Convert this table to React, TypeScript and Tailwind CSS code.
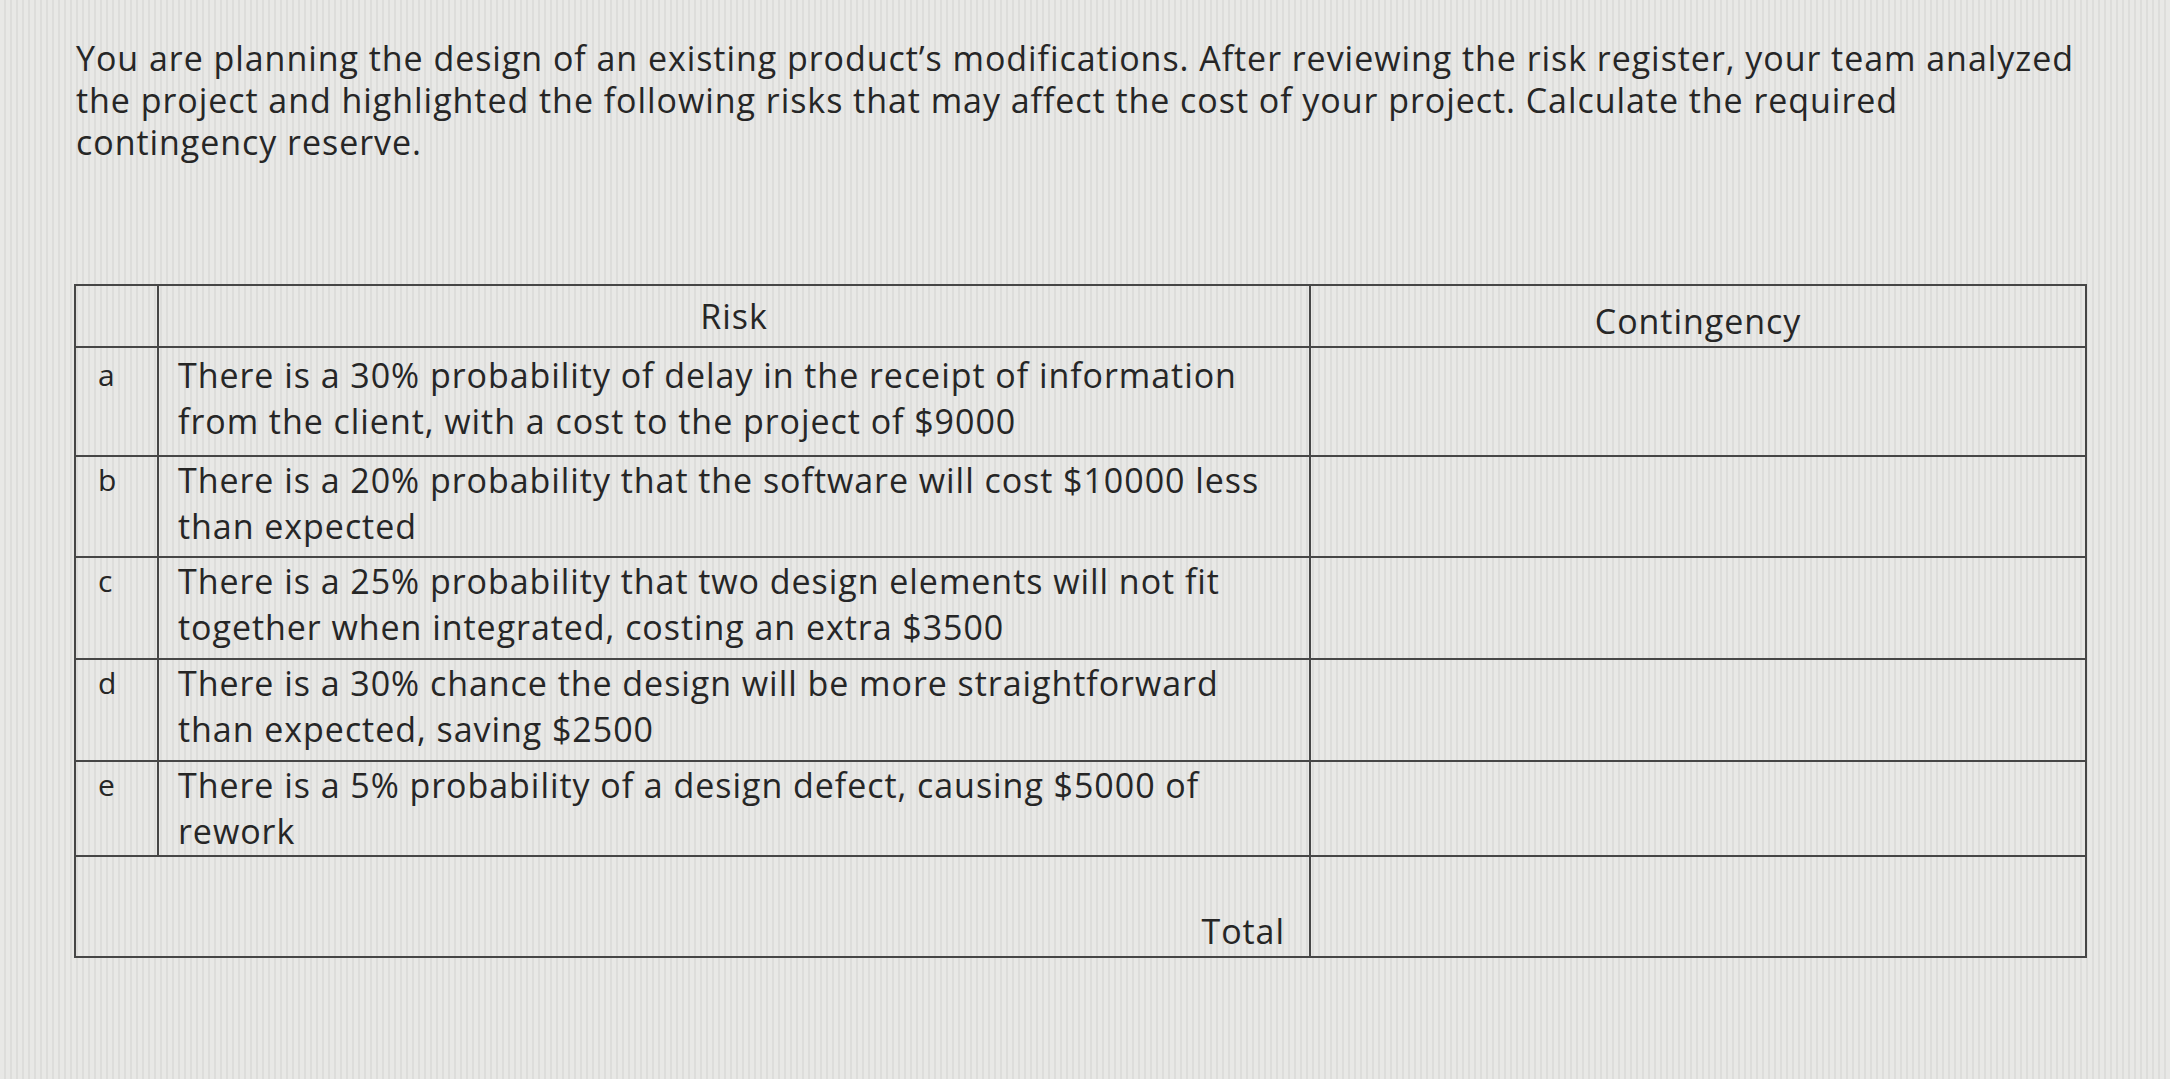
import React from "react";

const rows = [
  {
    k: "a",
    lines: [
      "There is a 30% probability of delay in the receipt of information",
      "from the client, with a cost to the project of $9000",
    ],
    h: "h-[109px]",
    pt: "pt-[4px]",
  },
  {
    k: "b",
    lines: [
      "There is a 20% probability that the software will cost $10000 less",
      "than expected",
    ],
    h: "h-[101px]",
    pt: "pt-[0px]",
  },
  {
    k: "c",
    lines: [
      "There is a 25% probability that two design elements will not fit",
      "together when integrated, costing an extra $3500",
    ],
    h: "h-[102px]",
    pt: "pt-[0px]",
  },
  {
    k: "d",
    lines: [
      "There is a 30% chance the design will be more straightforward",
      "than expected, saving $2500",
    ],
    h: "h-[102px]",
    pt: "pt-[0px]",
  },
  {
    k: "e",
    lines: [
      "There is a 5% probability of a design defect, causing $5000 of",
      "rework",
    ],
    h: "h-[95px]",
    pt: "pt-[0px]",
  },
];

export default function App() {
  return (
    <div
      className="min-h-[1079px] w-full overflow-hidden bg-[#e4e4e2] bg-[repeating-linear-gradient(90deg,#e8e8e6_0px,#e8e8e6_4px,#dddddb_4px,#dddddb_6px)] text-[#262626]"
      style={{ fontFamily: '"Open Sans", "Noto Sans", sans-serif' }}
    >
      <div className="pl-[76px] pt-[37px] text-[34px] leading-[42px] tracking-[0.95px]">
        <div className="whitespace-nowrap">
          You are planning the design of an existing product’s modifications. After reviewing the risk register, your team analyzed
        </div>
        <div className="whitespace-nowrap">
          the project and highlighted the following risks that may affect the cost of your project. Calculate the required
        </div>
        <div className="whitespace-nowrap">contingency reserve.</div>
      </div>

      <table className="ml-[74px] mt-[121px] table-fixed border-collapse text-[34px] leading-[46px] tracking-[0.95px]">
        <colgroup>
          <col className="w-[83px]" />
          <col className="w-[1152px]" />
          <col className="w-[776px]" />
        </colgroup>
        <tbody>
          <tr className="h-[62px]">
            <td className="border-2 border-[#464646]"></td>
            <td className="border-2 border-[#464646] text-center align-middle">
              Risk
            </td>
            <td className="border-2 border-[#464646] pt-[10px] text-center align-middle">
              Contingency
            </td>
          </tr>
          {rows.map((r) => (
            <tr key={r.k} className={r.h}>
              <td className={`border-2 border-[#464646] pl-[22px] align-top text-[30px] ${r.pt}`}>
                {r.k}
              </td>
              <td className={`border-2 border-[#464646] pl-[19px] align-top ${r.pt}`}>
                {r.lines.map((l) => (
                  <div key={l} className="whitespace-nowrap">
                    {l}
                  </div>
                ))}
              </td>
              <td className="border-2 border-[#464646]"></td>
            </tr>
          ))}
          <tr className="h-[101px]">
            <td
              colSpan={2}
              className="border-2 border-[#464646] pr-[24px] pb-[2px] text-right align-bottom"
            >
              Total
            </td>
            <td className="border-2 border-[#464646]"></td>
          </tr>
        </tbody>
      </table>
    </div>
  );
}
